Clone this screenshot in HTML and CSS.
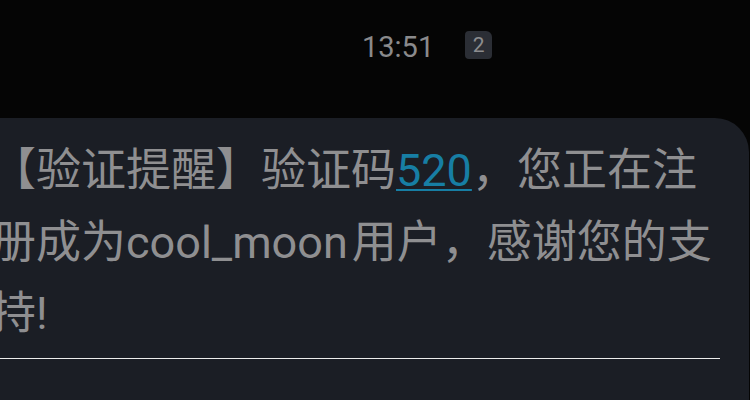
FILE: index.html
```html
<!DOCTYPE html>
<html lang="zh-CN">
<head>
<meta charset="utf-8">
<link rel="stylesheet" href="styles.css">
</head>
<body>
<div class="screen">
  <div class="meta">
    <span class="time">13:51</span>
    <span class="sim">2</span>
  </div>
  <div class="bubble">
    <p class="msg">【验证提醒】验证码<a class="code" href="#">520</a>，您正在注册成为<span class="latin">cool_moon</span>用户，感谢您的支持!</p>
    <div class="divider"></div>
  </div>
</div>
</body>
</html>
```
FILE: styles.css
```css
html, body {
  margin: 0;
  padding: 0;
  background: #050505;
  width: 750px;
  height: 400px;
  overflow: hidden;
}
.screen {
  font-family: Roboto, "Noto Sans CJK SC", sans-serif;
}
.meta {
  height: 118px;
  display: flex;
  align-items: flex-start;
  padding-left: 362px;
  padding-top: 29px;
  box-sizing: border-box;
  gap: 31px;
}
.time {
  font-size: 29px;
  line-height: 36px;
  color: #8a8a8c;
}
.sim {
  margin-top: 2px;
  width: 27px;
  height: 28px;
  border-radius: 4px 6px 4px 4px;
  background: #2b2e35;
  color: #8c8c8e;
  font-size: 21px;
  line-height: 28px;
  text-align: center;
}
.bubble {
  margin-left: -40px;
  width: 789px;
  height: 282px;
  background: #1b1e25;
  border-top-right-radius: 34px;
  padding: 17px 0 0 31px;
  box-sizing: border-box;
}
.msg {
  margin: 0;
  width: 735px;
  font-size: 45px;
  line-height: 71.5px;
  color: #8f8f91;
  font-family: Roboto, "Noto Sans CJK SC", sans-serif;
}
.code {
  color: #177ea4;
  text-decoration: underline;
  text-decoration-thickness: 2px;
  text-underline-offset: 3px;
}
.latin {
  margin-right: 4px;
}
.divider {
  margin-top: 8px;
  width: 729px;
  height: 1px;
  background: #ececec;
}
```
